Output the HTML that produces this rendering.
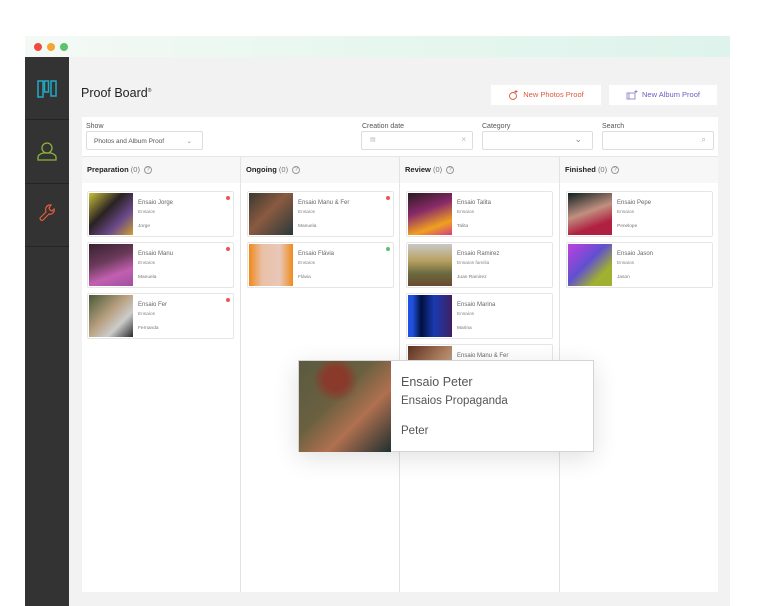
<!DOCTYPE html>
<html><head><meta charset="utf-8"><style>
*{box-sizing:border-box;margin:0;padding:0}
body{width:766px;height:606px;background:#fff;position:relative;overflow:hidden;font-family:"Liberation Sans",sans-serif;color:#333}
.a{position:absolute}
.titlebar{left:25px;top:36px;width:705px;height:21px;background:linear-gradient(90deg,#f5f9f6,#e6f7ef 50%,#def3ec)}
.dot{width:8px;height:8px;border-radius:50%;top:43px}
.side{left:25px;top:57px;width:44px;height:549px;background:#333}
.sdiv{left:25px;width:44px;height:1px;background:#242424}
.main{left:69px;top:57px;width:661px;height:549px;background:#f2f2f2}
.board{left:82px;top:117px;width:636px;height:475px;background:#fff}
.lbl{font-size:7px;color:#555}
.inp{height:19px;border:1px solid #ddd;background:#fff;border-radius:2px}
.colh{top:157px;height:26px;background:#f7f7f7;font-size:7.5px;line-height:26px;padding-left:5px}
.colh b{color:#222}
.colh span{color:#777}
.q{display:inline-block;width:8px;height:8px;border:1px solid #999;border-radius:50%;font-size:6px;line-height:7px;text-align:center;color:#888;vertical-align:middle;margin-left:2px;font-style:normal}
.vd{top:157px;width:1px;height:435px;background:#e3e3e3}
.card{width:147px;height:46px;background:#fff;border:1px solid #e6e6e6;border-radius:2px}
.card .img{position:absolute;left:1px;top:1px;width:44px;height:42px}
.card .t{position:absolute;left:50px;top:8px;font-size:6px;color:#666}
.card .s{position:absolute;left:50px;top:18px;font-size:4.8px;color:#888}
.card .n{position:absolute;left:50px;top:32px;font-size:4.8px;color:#777}
.card .d{position:absolute;right:3px;top:4px;width:4px;height:4px;border-radius:50%}
.btn{top:85px;height:20px;background:#fff;font-size:7.5px;line-height:20px;text-align:center}
</style></head><body>
<div class="a titlebar"></div>
<div class="a dot" style="left:34px;background:#ee4a3f"></div>
<div class="a dot" style="left:47px;background:#f4a531"></div>
<div class="a dot" style="left:60px;background:#5cc36c"></div>
<div class="a side"></div>
<div class="a sdiv" style="top:119px"></div>
<div class="a sdiv" style="top:183px"></div>
<div class="a sdiv" style="top:246px"></div>
<svg class="a" style="left:37px;top:80px" width="20" height="18" viewBox="0 0 20 18" fill="none" stroke="#22a9c4" stroke-width="1.5"><rect x="1" y="1" width="5" height="16"/><rect x="7.5" y="1" width="4" height="11"/><rect x="14" y="1" width="5" height="15"/></svg>
<svg class="a" style="left:37px;top:141px" width="20" height="20" viewBox="0 0 20 20" fill="none" stroke="#8db33c" stroke-width="1.3"><circle cx="10" cy="7" r="5"/><path d="M1 19v-3c0-2 2-3 5-4h8c3 1 5 2 5 4v3z"/></svg>
<svg class="a" style="left:38px;top:203px" width="18" height="18" viewBox="0 0 18 18" fill="none" stroke="#e25d3c" stroke-width="1.2"><path d="M2 15l6-6c-1-3 0-6 3-7h2l-2 3 1 2 2 1 2-2c1 3-2 6-5 5l-6 6c-1 1-3 0-3-2z"/></svg>
<div class="a main"></div>
<div class="a" style="left:81px;top:86px;font-size:12.5px;color:#222">Proof Board<sup style="font-size:5px">®</sup></div>
<div class="a btn" style="left:491px;width:110px;color:#e1573a">
<svg width="11" height="10" viewBox="0 0 11 10" style="vertical-align:middle;margin-right:4px" fill="none" stroke="#e1573a" stroke-width="0.9"><circle cx="5" cy="6" r="3.5"/><path d="M8 0v3M6.5 1.5h3"/></svg>New Photos Proof</div>
<div class="a btn" style="left:609px;width:108px;color:#6a5fc1">
<svg width="12" height="10" viewBox="0 0 12 10" style="vertical-align:middle;margin-right:4px" fill="none" stroke="#8c84cc" stroke-width="0.9"><rect x="1" y="3" width="8" height="6"/><path d="M3 3v6M10 0v3M8.5 1.5h3"/></svg>New Album Proof</div>
<div class="a board"></div>
<div class="a lbl" style="left:86px;top:123px">Show</div>
<div class="a inp" style="left:86px;top:131px;width:117px;font-size:6.5px;line-height:19px;padding-left:7px;color:#555">Photos and Album Proof<span style="position:absolute;right:10px;color:#888">⌄</span></div>
<div class="a lbl" style="left:362px;top:123px">Creation date</div>
<div class="a inp" style="left:361px;top:131px;width:112px"><span style="position:absolute;left:8px;top:4px;font-size:6px;color:#bbb">▤</span><span style="position:absolute;right:6px;top:3px;font-size:8px;color:#bbb">×</span></div>
<div class="a lbl" style="left:482px;top:123px">Category</div>
<div class="a inp" style="left:482px;top:131px;width:111px"><span style="position:absolute;right:10px;top:2px;font-size:9px;color:#888">⌄</span></div>
<div class="a lbl" style="left:602px;top:123px">Search</div>
<div class="a inp" style="left:602px;top:131px;width:112px"><span style="position:absolute;right:7px;top:3px;font-size:8px;color:#aaa">⌕</span></div>
<div class="a" style="left:82px;top:156px;width:636px;height:1px;background:#e6e6e6"></div>
<div class="a colh" style="left:82px;width:158px"><b>Preparation</b> <span>(0)</span> <i class="q">?</i></div>
<div class="a colh" style="left:241px;width:158px"><b>Ongoing</b> <span>(0)</span> <i class="q">?</i></div>
<div class="a colh" style="left:400px;width:159px"><b>Review</b> <span>(0)</span> <i class="q">?</i></div>
<div class="a colh" style="left:560px;width:158px"><b>Finished</b> <span>(0)</span> <i class="q">?</i></div>
<div class="a vd" style="left:240px"></div>
<div class="a vd" style="left:399px"></div>
<div class="a vd" style="left:559px"></div>

<div class="a card" style="left:87px;top:191px"><div class="img" style="background:linear-gradient(135deg,#c9c13c,#2a2222 40%,#6a4a8a 70%,#d0a030)"></div><div class="t">Ensaio Jorge</div><div class="s">Ensaios</div><div class="n">Jorge</div><div class="d" style="background:#ee5555"></div></div>
<div class="a card" style="left:87px;top:242px"><div class="img" style="background:linear-gradient(160deg,#3a2030,#6a3a5a 40%,#c25fb0 70%,#a050a0)"></div><div class="t">Ensaio Manu</div><div class="s">Ensaios</div><div class="n">Manuela</div><div class="d" style="background:#ee5555"></div></div>
<div class="a card" style="left:87px;top:293px"><div class="img" style="background:linear-gradient(135deg,#4a5a3a,#b8a080 45%,#ccc 70%,#2a2a2a)"></div><div class="t">Ensaio Fer</div><div class="s">Ensaios</div><div class="n">Fernanda</div><div class="d" style="background:#ee5555"></div></div>

<div class="a card" style="left:247px;top:191px"><div class="img" style="background:linear-gradient(135deg,#3a3a30,#8a5a40 45%,#2a3a3a)"></div><div class="t">Ensaio Manu &amp; Fer</div><div class="s">Ensaios</div><div class="n">Manuela</div><div class="d" style="background:#ee5555"></div></div>
<div class="a card" style="left:247px;top:242px"><div class="img" style="background:linear-gradient(90deg,#f08a1a,#e8c0a8 30%,#e8c8b8 70%,#f08a1a)"></div><div class="t">Ensaio Flávia</div><div class="s">Ensaios</div><div class="n">Flávia</div><div class="d" style="background:#5cc36c"></div></div>

<div class="a card" style="left:406px;top:191px"><div class="img" style="background:linear-gradient(160deg,#2a1a20,#8a2a6a 40%,#f0a020 75%,#d04080)"></div><div class="t">Ensaio Talita</div><div class="s">Ensaios</div><div class="n">Talita</div></div>
<div class="a card" style="left:406px;top:242px"><div class="img" style="background:linear-gradient(180deg,#c8c8c8,#b8a060 40%,#6a6a40 70%,#6a4a30)"></div><div class="t">Ensaio Ramirez</div><div class="s">Ensaios familia</div><div class="n">Juan Ramirez</div></div>
<div class="a card" style="left:406px;top:293px"><div class="img" style="background:linear-gradient(90deg,#2050e0 10%,#001040 30%,#1a3ab0 60%,#402060)"></div><div class="t">Ensaio Marina</div><div class="s">Ensaios</div><div class="n">Marina</div></div>
<div class="a card" style="left:406px;top:344px"><div class="img" style="background:linear-gradient(135deg,#5a3020,#b08060 50%,#ccc)"></div><div class="t">Ensaio Manu &amp; Fer</div></div>

<div class="a card" style="left:566px;top:191px"><div class="img" style="background:linear-gradient(160deg,#102020,#c09080 45%,#b02040 75%)"></div><div class="t">Ensaio Pepe</div><div class="s">Ensaios</div><div class="n">Penelope</div></div>
<div class="a card" style="left:566px;top:242px"><div class="img" style="background:linear-gradient(135deg,#c040e0,#6050d0 45%,#a0b030 75%)"></div><div class="t">Ensaio Jason</div><div class="s">Ensaios</div><div class="n">Jason</div></div>

<div class="a" style="left:298px;top:360px;width:296px;height:92px;background:#fff;border:1px solid #d4d4d4;box-shadow:0 6px 24px rgba(0,0,0,.12)">
<div class="a" style="left:0;top:0;width:92px;height:91px;background:radial-gradient(circle at 40% 20%,#8a3a2a 12%,transparent 25%),linear-gradient(135deg,#5a5a40,#6a6040 40%,#b07050 65%,#203030)"></div>
<div class="a" style="left:102px;top:14px;font-size:12.5px;color:#555">Ensaio Peter</div>
<div class="a" style="left:102px;top:34px;font-size:11.5px;color:#555">Ensaios Propaganda</div>
<div class="a" style="left:102px;top:64px;font-size:11.5px;color:#555">Peter</div>
</div>
</body></html>
